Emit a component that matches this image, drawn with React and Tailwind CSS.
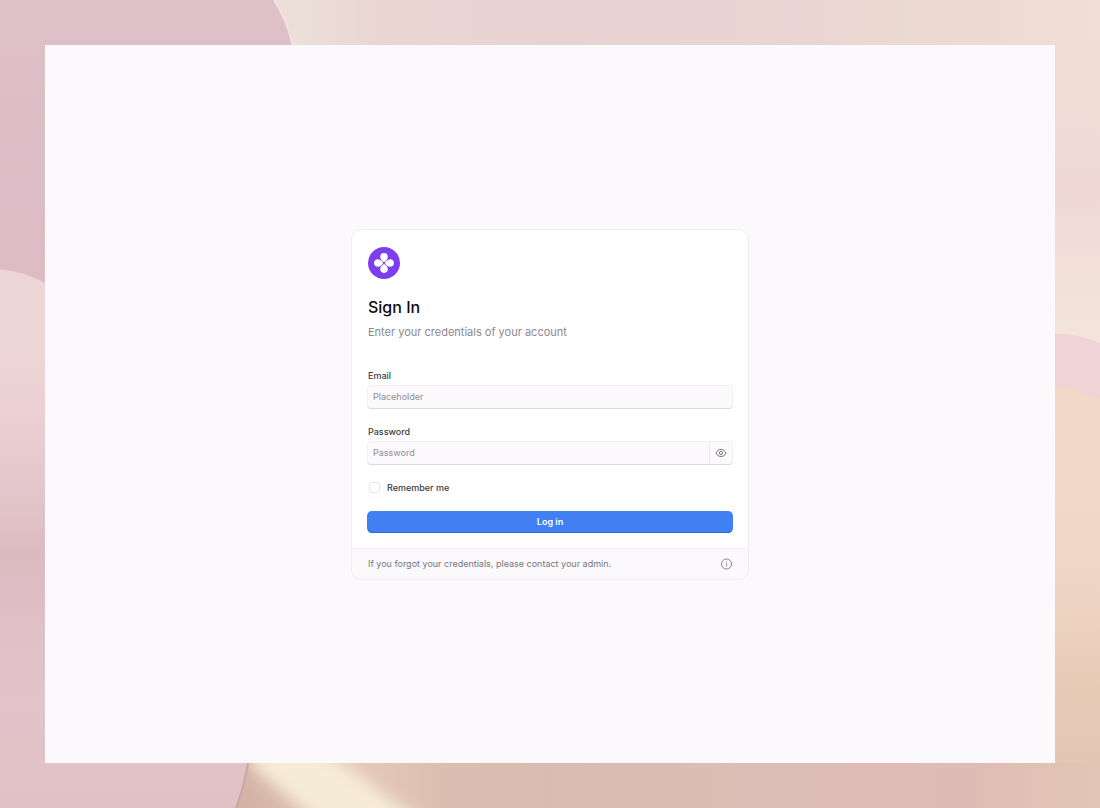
import React, { useState } from "react";

// Painted backdrop behind the page panel
function Backdrop() {
  return (
    <svg
      className="absolute inset-0 h-full w-full"
      viewBox="0 0 1100 808"
      preserveAspectRatio="none"
      aria-hidden="true"
    >
      <defs>
        <linearGradient id="top" x1="0" x2="1" y1="0" y2="0">
          <stop offset="0.27" stopColor="#ecdfda" />
          <stop offset="0.34" stopColor="#e9d6d2" />
          <stop offset="0.5" stopColor="#e8d3d2" />
          <stop offset="0.75" stopColor="#ead5d3" />
          <stop offset="0.81" stopColor="#ead9d0" />
          <stop offset="1" stopColor="#f1ded7" />
        </linearGradient>
        <linearGradient id="petal" x1="0" x2="0" y1="0" y2="1">
          <stop offset="0" stopColor="#dec0c9" />
          <stop offset="1" stopColor="#dcbbc5" />
        </linearGradient>
        <linearGradient id="left" x1="0" x2="0" y1="268" y2="808" gradientUnits="userSpaceOnUse">
          <stop offset="0" stopColor="#ecd5d6" />
          <stop offset="0.15" stopColor="#ecd6d5" />
          <stop offset="0.27" stopColor="#eccfd3" />
          <stop offset="0.42" stopColor="#e3c6cb" />
          <stop offset="0.53" stopColor="#dbbac0" />
          <stop offset="0.66" stopColor="#dfc0c6" />
          <stop offset="0.8" stopColor="#e2c4ca" />
          <stop offset="1" stopColor="#e0c1c6" />
        </linearGradient>
        <linearGradient id="right" x1="0" x2="0" y1="45" y2="350" gradientUnits="userSpaceOnUse">
          <stop offset="0" stopColor="#f0dcd5" />
          <stop offset="0.5" stopColor="#f0d9d5" />
          <stop offset="0.8" stopColor="#f1e1d9" />
          <stop offset="1" stopColor="#f3e5dd" />
        </linearGradient>
        <linearGradient id="sand" x1="0" x2="0" y1="385" y2="808" gradientUnits="userSpaceOnUse">
          <stop offset="0" stopColor="#f2d9c7" />
          <stop offset="0.2" stopColor="#f3dac8" />
          <stop offset="0.5" stopColor="#eed4c2" />
          <stop offset="0.75" stopColor="#e6c9b5" />
          <stop offset="1" stopColor="#e2c4b5" />
        </linearGradient>
        <linearGradient id="bottom" x1="235" x2="1100" y1="0" y2="0" gradientUnits="userSpaceOnUse">
          <stop offset="0" stopColor="#d2b1a3" />
          <stop offset="0.14" stopColor="#e4c9b7" />
          <stop offset="0.24" stopColor="#dcbeb1" />
          <stop offset="0.36" stopColor="#d9bbb1" />
          <stop offset="0.6" stopColor="#dcbeb6" />
          <stop offset="0.85" stopColor="#debcb6" />
          <stop offset="0.92" stopColor="#e0c1b4" />
          <stop offset="1" stopColor="#e2c5b5" />
        </linearGradient>
        <filter id="soft" x="-30%" y="-60%" width="160%" height="220%">
          <feGaussianBlur stdDeviation="8" />
        </filter>
      </defs>
      <rect width="1100" height="404" fill="url(#top)" />
      <rect x="1040" y="45" width="60" height="305" fill="url(#right)" />
      <path d="M0 0H274Q287 20 293 46L200 290H0Z" fill="url(#petal)" />
      <path d="M274 0Q287 20 293 46" fill="none" stroke="#f3e0df" strokeWidth="2" />
      <path d="M1050 333Q1080 334 1100 343V410H1050Z" fill="#efd3d6" />
      <path d="M1050 387H1071Q1085 395 1100 399V808H1050Z" fill="url(#sand)" />
      <rect x="200" y="763" width="900" height="45" fill="url(#bottom)" />
      <path
        d="M250 740H310Q345 765 375 788T440 830H330Q290 800 250 765Z"
        fill="#f6ebd7"
        filter="url(#soft)"
      />
      <path d="M0 269Q22 271 45 283L248 763Q244 787 236 808H0Z" fill="url(#left)" />
      <path d="M248 763Q244 787 236 808" fill="none" stroke="#c9a8a8" strokeWidth="2" />
    </svg>
  );
}

function Logo() {
  return (
    <svg className="size-8" viewBox="0 0 32 32" aria-hidden="true">
      <circle cx="16" cy="16" r="16" fill="#7c3fee" />
      {[0, 90, 180, 270].map((angle) => (
        <path
          key={angle}
          d="M16 15.2C14.6 14.2 12.2 12.4 12.2 9.9a3.8 3.8 0 0 1 7.6 0C19.8 12.4 17.4 14.2 16 15.2Z"
          fill="#fff"
          transform={`rotate(${angle} 16 16)`}
        />
      ))}
    </svg>
  );
}

function EyeIcon() {
  return (
    <svg className="size-3" viewBox="0 0 12 12" fill="none" stroke="currentColor" aria-hidden="true">
      <path d="M1 6C2 3.7 3.8 2.5 6 2.5S10 3.7 11 6C10 8.3 8.2 9.5 6 9.5S2 8.3 1 6Z" />
      <circle cx="6" cy="6" r="1.6" />
    </svg>
  );
}

function InfoIcon() {
  return (
    <svg className="size-3" viewBox="0 0 12 12" fill="none" stroke="currentColor" aria-hidden="true">
      <circle cx="6.5" cy="6" r="5" strokeWidth="0.9" />
      <path d="M6 5.6H6.6V8.4" strokeWidth="0.8" />
      <circle cx="6.5" cy="3.8" r="0.5" fill="currentColor" stroke="none" />
    </svg>
  );
}

const fieldClass =
  "flex h-[22px] rounded-[3px] bg-[#fbf9fc] shadow-[0_1px_0_0_#dddbe0,0_0_0_1px_#f1eff3]";
const inputClass =
  "min-w-0 flex-1 bg-transparent px-[5px] text-[9px] text-[#3c3b40] outline-none placeholder:text-[#8f8e93]";
const labelClass = "block text-[9px] leading-4 font-medium text-[#3c3b40]";

function App() {
  const [email, setEmail] = useState("");
  const [password, setPassword] = useState("");
  const [showPassword, setShowPassword] = useState(false);
  const [remember, setRemember] = useState(false);

  const handleSubmit = (e) => {
    e.preventDefault();
  };

  return (
    <div className="relative flex min-h-screen p-[45px] font-['Inter',sans-serif]">
      <Backdrop />
      <main className="relative flex flex-1 items-center justify-center bg-[#fbf9fc]">
        <div className="w-full max-w-[396px] overflow-hidden rounded-[10px] bg-white shadow-[0_0_0_1px_#f1eff3]">
          <div className="px-4 pt-[17px] pb-4">
            <Logo />
            <h1 className="mt-4 text-[16px] leading-6 font-medium text-[#0b0b0d]">Sign In</h1>
            <p className="mt-1 text-[11px] leading-[18px] text-[#8a898e]">
              Enter your credentials of your account
            </p>

            {/* Credentials form */}
            <form onSubmit={handleSubmit} className="mt-[27px] flex flex-col gap-4">
              <div className="flex flex-col gap-[2px]">
                <label htmlFor="email" className={labelClass}>
                  Email
                </label>
                <div className={fieldClass}>
                  <input
                    id="email"
                    type="email"
                    placeholder="Placeholder"
                    value={email}
                    onChange={(e) => setEmail(e.target.value)}
                    className={inputClass}
                  />
                </div>
              </div>

              <div className="flex flex-col gap-[2px]">
                <label htmlFor="password" className={labelClass}>
                  Password
                </label>
                <div className={fieldClass}>
                  <input
                    id="password"
                    type={showPassword ? "text" : "password"}
                    placeholder="Password"
                    value={password}
                    onChange={(e) => setPassword(e.target.value)}
                    className={inputClass}
                  />
                  <button
                    type="button"
                    aria-label="Show password"
                    onClick={() => setShowPassword(!showPassword)}
                    className="flex w-[23px] items-center justify-center border-l border-[#e9e7eb] text-[#77767b]"
                  >
                    <EyeIcon />
                  </button>
                </div>
              </div>

              <div className="flex h-4 items-center gap-[7px] pl-[1px]">
                <input
                  id="remember"
                  type="checkbox"
                  checked={remember}
                  onChange={(e) => setRemember(e.target.checked)}
                  className="size-[11px] appearance-none rounded-[3px] border border-[#e8e6ea] bg-white checked:bg-[#4080f2]"
                />
                <label htmlFor="remember" className={labelClass}>
                  Remember me
                </label>
              </div>

              <button
                type="submit"
                className="h-5 rounded-[4px] bg-[#4080f2] text-[9px] font-semibold text-white shadow-[0_1px_0_0_#2a6cd8,0_0_0_1px_#4080f2]"
              >
                Log in
              </button>
            </form>
          </div>

          <footer className="flex items-center justify-between border-t border-[#f0eef2] bg-[#fbf9fc] px-4 py-[7px]">
            <p className="text-[9px] leading-4 text-[#77767b]">
              If you forgot your credentials, please contact your admin.
            </p>
            <span className="text-[#77767b]">
              <InfoIcon />
            </span>
          </footer>
        </div>
      </main>
    </div>
  );
}

export default App;
